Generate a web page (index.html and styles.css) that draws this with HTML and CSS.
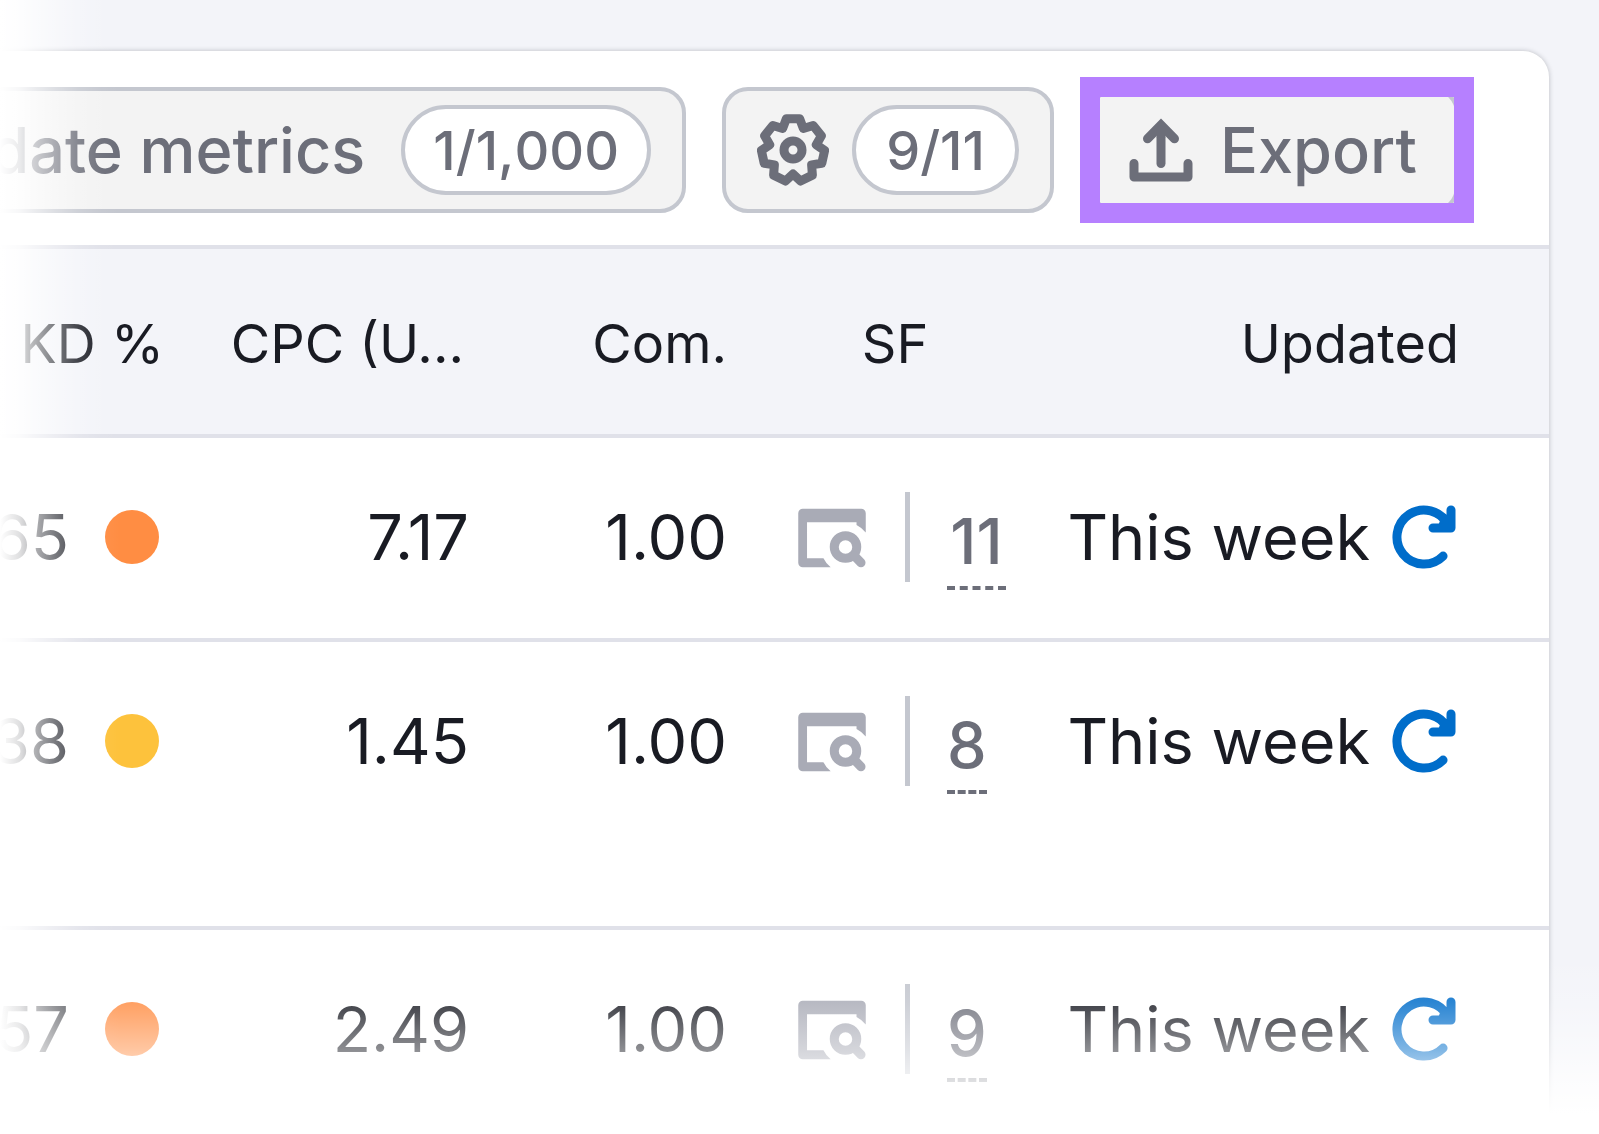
FILE: index.html
```html
<!DOCTYPE html>
<html lang="en">
<head>
<meta charset="utf-8">
<title>Keyword metrics</title>
<link rel="stylesheet" href="styles.css">
</head>
<body>
<svg class="sprite" aria-hidden="true">
  <symbol id="serp" viewBox="0 0 16 16">
    <path fill="currentColor" d="M1.5 1.5h13a1 1 0 0 1 1 1v4.3A5.8 5.8 0 0 0 13.45 5.1V4.5h-11v8h3.65a5.7 5.7 0 0 0 1.6 2H1.5a1 1 0 0 1-1-1v-11a1 1 0 0 1 1-1z"/>
    <circle cx="11" cy="10" r="2.5" fill="none" stroke="currentColor" stroke-width="2"/>
    <path fill="none" stroke="currentColor" stroke-width="2" stroke-linecap="round" d="M13 12l1.45 1.5"/>
  </symbol>
  <symbol id="refresh" viewBox="0 0 16 16">
    <path fill="currentColor" d="M11.5 4.5 13 4h1v2h-3z"/>
    <path fill="none" stroke="currentColor" stroke-width="2" stroke-linecap="round" stroke-linejoin="round" d="M14 2v4h-4M13.3 5.2A6 6 0 1 0 12.24 12.24"/>
  </symbol>
</svg>
<div class="frame">
  <main class="panel">
    <div class="toolbar">
      <button class="btn" type="button">Update metrics <span class="pill">1/1,000</span></button>
      <button class="btn btn-icon" type="button" aria-label="Manage columns, 9 of 11">
        <svg class="icon" viewBox="0 0 16 16" fill="none" stroke="currentColor" stroke-width="2" stroke-linejoin="round">
          <path d="M6.53 1.05 9.47 1.05 10.3 3.22 12.48 2.55 14.31 4.85 13.17 6.82 15.03 8.11 14.4 10.96 12.14 11.3 12.31 13.58 9.67 14.9 8 13.35 6.33 14.9 3.69 13.58 3.86 11.3 1.6 10.96 .97 8.11 2.83 6.82 1.69 4.85 3.52 2.55 5.7 3.22z"/>
          <circle cx="8" cy="8" r="2"/>
        </svg>
        <span class="pill">9/11</span>
      </button>
      <div class="highlighted">
        <button class="btn btn-icon btn-export" type="button">
          <svg class="icon" viewBox="0 0 16 16" fill="none" stroke="currentColor" stroke-width="2" stroke-linecap="round">
            <path fill="currentColor" stroke="none" d="M7 5.2 8 3l1 2.2z"/>
            <path d="M5 5.5 8 2.45 11 5.5"/>
            <path d="M8 11V3.5"/>
            <path stroke-linejoin="round" d="M2 11v3h12v-3"/>
          </svg>
          Export
        </button>
      </div>
    </div>
    <table class="metrics">
      <colgroup>
        <col><col class="col-cpc"><col class="col-com"><col class="col-sf"><col class="col-updated">
      </colgroup>
      <thead>
        <tr><th scope="col" class="kd-head">KD %</th><th scope="col" class="cpc-head">CPC (U...</th><th scope="col">Com.</th><th scope="col" class="sf-head">SF</th><th scope="col">Updated</th></tr>
      </thead>
      <tbody>
        <tr>
          <td><div class="kd">65 <span class="dot dot-hard"></span></div></td>
          <td>7.17</td>
          <td>1.00</td>
          <td><div class="sf"><svg class="icon serp"><use href="#serp"/></svg><span class="divider"></span><a class="count count-wide" href="#sf">11</a></div></td>
          <td><div class="updated">This week <button class="refresh" type="button" aria-label="Refresh"><svg class="icon"><use href="#refresh"/></svg></button></div></td>
        </tr>
        <tr class="tall">
          <td><div class="kd">38 <span class="dot dot-possible"></span></div></td>
          <td>1.45</td>
          <td>1.00</td>
          <td><div class="sf"><svg class="icon serp"><use href="#serp"/></svg><span class="divider"></span><a class="count" href="#sf">8</a></div></td>
          <td><div class="updated">This week <button class="refresh" type="button" aria-label="Refresh"><svg class="icon"><use href="#refresh"/></svg></button></div></td>
        </tr>
        <tr>
          <td><div class="kd">57 <span class="dot dot-hard"></span></div></td>
          <td>2.49</td>
          <td>1.00</td>
          <td><div class="sf"><svg class="icon serp"><use href="#serp"/></svg><span class="divider"></span><a class="count" href="#sf">9</a></div></td>
          <td><div class="updated">This week <button class="refresh" type="button" aria-label="Refresh"><svg class="icon"><use href="#refresh"/></svg></button></div></td>
        </tr>
      </tbody>
    </table>
  </main>
</div>
</body>
</html>
```
FILE: styles.css
```css
* {
  box-sizing: border-box;
}

body {
  margin: 0;
  background: #fff;
  color: #191b23;
  font-family: Inter, "Liberation Sans", sans-serif;
  font-size: 63px;
  line-height: 90px;
}

button {
  font: inherit;
  color: inherit;
}

.sprite {
  display: none;
}

/* The panel dissolves into white at the left and bottom edges */
.frame {
  position: relative;
  overflow: hidden;
  padding: 51px 50px 0 0;
  background: #f3f4f9;
}

.frame::before,
.frame::after {
  content: "";
  position: absolute;
  z-index: 2;
  left: 0;
  bottom: 0;
  pointer-events: none;
}

.frame::before {
  top: 0;
  width: 120px;
  background: linear-gradient(to right, #fff 0, rgba(255, 255, 255, .86) 20px, rgba(255, 255, 255, .66) 35px, rgba(255, 255, 255, .42) 55px, rgba(255, 255, 255, .18) 78px, rgba(255, 255, 255, .04) 102px, rgba(255, 255, 255, 0) 120px);
}

.frame::after {
  right: 0;
  height: 180px;
  background: linear-gradient(to top, #fff 20px, rgba(255, 255, 255, .77) 54px, rgba(255, 255, 255, .5) 84px, rgba(255, 255, 255, .17) 132px, rgba(255, 255, 255, 0) 180px);
}

.panel {
  border-radius: 0 26px 0 0;
  background: #fff;
  box-shadow: 0 0 5px rgba(25, 27, 35, .25);
}

.toolbar {
  display: flex;
  justify-content: flex-end;
  gap: 36px;
  padding: 36px 90px 32px 0;
  border-bottom: 4px solid #e0e1e9;
}

.btn {
  display: flex;
  flex: none;
  align-items: center;
  gap: 36px;
  height: 126px;
  padding: 0 31px;
  border: 4px solid #c4c7cf;
  border-radius: 26px;
  background: #f3f3f3;
  color: #6c6e79;
  font-weight: 500;
  white-space: nowrap;
}

.btn-icon {
  gap: 23px;
}

.btn-export {
  padding-right: 38px;
}

.pill {
  min-width: 167px;
  height: 90px;
  padding: 0 28px;
  border: 4px solid #c4c7cf;
  border-radius: 45px;
  background: #fff;
  font-size: 54px;
  font-kerning: none;
  line-height: 84px;
  text-align: center;
}

.highlighted {
  position: relative;
  flex: none;
}

.highlighted::after {
  content: "";
  position: absolute;
  inset: -10px -15px -10px -10px;
  border: 20px solid #b680ff;
  pointer-events: none;
}

.icon {
  display: block;
  flex: none;
  width: 72px;
  height: 72px;
}

.metrics {
  width: 100%;
  table-layout: fixed;
  border-spacing: 0;
}

.col-cpc {
  width: 310px;
}

.col-com {
  width: 258px;
}

.col-sf {
  width: 270px;
}

.col-updated {
  width: 519px;
}

th,
td {
  padding: 54px 33px 0 0;
  border-bottom: 4px solid #e0e1e9;
  text-align: right;
  vertical-align: top;
  white-space: nowrap;
}

th {
  height: 189px;
  padding-top: 59px;
  background: #f3f4f9;
  font-size: 54px;
  font-weight: 400;
  line-height: 72px;
}

td {
  height: 204px;
}

.tall td {
  height: 288px;
}

tbody tr:last-child td {
  border-bottom: 0;
}

th:last-child {
  padding-right: 90px;
}

td:last-child {
  padding-right: 89px;
}

.kd-head {
  padding-right: 28px;
}

.cpc-head {
  padding-right: 38px;
}

.sf-head {
  padding-right: 0;
  text-align: center;
}

.kd,
.updated {
  display: flex;
  align-items: center;
  justify-content: flex-end;
  gap: 36px;
}

.updated {
  gap: 18px;
}

.dot {
  flex: none;
  width: 54px;
  height: 54px;
  border-radius: 50%;
}

.dot-hard {
  background: #ff8d43;
}

.dot-possible {
  background: #fdc23c;
}

.sf {
  display: flex;
  align-items: flex-start;
  gap: 37px;
  padding-left: 36px;
}

.serp {
  margin-top: 10px;
  color: #a9abb6;
}

.divider {
  flex: none;
  width: 5px;
  height: 90px;
  background: #c4c7cf;
}

.count {
  flex: none;
  padding: 13px 0 9px;
  border-bottom: 4px dashed #6c6e79;
  color: #6c6e79;
  font-weight: 500;
  line-height: 72px;
  text-align: center;
  text-decoration: none;
}

.count-wide {
  min-width: 59px;
}

.refresh {
  padding: 0;
  border: 0;
  background: none;
  color: #006dca;
}
```
